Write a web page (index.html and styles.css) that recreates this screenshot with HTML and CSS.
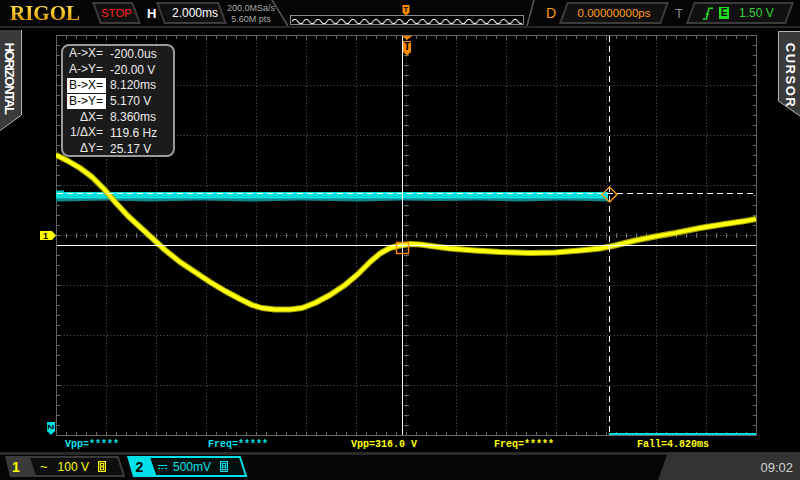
FILE: index.html
```html
<!DOCTYPE html>
<html>
<head>
<meta charset="utf-8">
<title>Scope</title>
<link rel="stylesheet" href="styles.css">
</head>
<body>
<div class="scope">
  <header class="topbar">
    <div class="logo">RIGOL</div>
    <div class="box box-l stop">STOP</div>
    <div class="hlabel">H</div>
    <div class="box box-l tbase">2.000ms</div>
    <div class="srate"><span>200.0MSa/s</span><span>5.60M pts</span></div>
    <svg class="memory" width="266" height="26" viewBox="0 0 266 26">
      <defs>
        <pattern id="mw" x="22" y="16" width="11.6" height="9" patternUnits="userSpaceOnUse">
          <path d="M0 5.5Q2.9 1 5.8 5.5T11.6 5.5" stroke="#ffffff" stroke-width="1.1" fill="none"/>
        </pattern>
      </defs>
      <path d="M2 0L18 26M264 0L257 26" stroke="#555" stroke-width="1.6" fill="none"/>
      <rect x="20.5" y="15.5" width="233" height="9" fill="#000" stroke="#8a8a8a"/>
      <rect x="22" y="16" width="230" height="8" fill="url(#mw)"/>
      <path d="M132.5 5H139.5V12.5L136 15.5L132.5 12.5Z" fill="#ff8a00"/>
      <text x="136" y="11.5" class="tmark">T</text>
    </svg>
    <div class="dlabel">D</div>
    <div class="box box-r delay">0.00000000ps</div>
    <div class="tlabel">T</div>
    <div class="box box-r trig">
      <svg class="edge" width="10" height="13" viewBox="0 0 10 13">
        <path d="M0 12H3.4L6 1.2H10" stroke="#2fd52f" stroke-width="1.6" fill="none"/>
        <path d="M2.2 7.6L4.9 4.6L5.6 8.3Z" fill="#2fd52f"/>
      </svg>
      <span class="ebox">E</span>
      <span class="tlevel">1.50 V</span>
    </div>
  </header>

  <main class="main">
    <aside class="side side-left">
      <svg width="22" height="102" viewBox="0 0 22 102">
        <polygon points="0,0 21.5,0 21.5,85 0,100" fill="#3a3a3a"/>
        <polyline points="21.5,0 21.5,85 0,100.5" fill="none" stroke="#b5b5b5"/>
        <text class="tabtext tab-h" x="9" y="48" transform="rotate(90 9 48)">HORIZONTAL</text>
      </svg>
    </aside>

    <svg class="plot" width="756" height="409" viewBox="22 28 756 409">
      <defs>
        <pattern id="tx" x="56" y="0" width="10" height="10" patternUnits="userSpaceOnUse">
          <rect width="1" height="10" fill="#6a6a6a"/>
        </pattern>
        <pattern id="ty" x="0" y="35" width="10" height="10" patternUnits="userSpaceOnUse">
          <rect width="10" height="1" fill="#6a6a6a"/>
        </pattern>
        <clipPath id="gridclip"><rect x="56" y="35" width="701" height="401"/></clipPath>
      </defs>
      <!-- dotted graticule -->
      <path stroke="#5a5a5a" stroke-dasharray="1 2.333" fill="none"
        d="M106.5 36V435M156.5 36V435M206.5 36V435M256.5 36V435M306.5 36V435M356.5 36V435M406.5 36V435M456.5 36V435M506.5 36V435M556.5 36V435M606.5 36V435M656.5 36V435M706.5 36V435
           M57 85.5H756M57 135.5H756M57 185.5H756M57 235.5H756M57 285.5H756M57 335.5H756M57 385.5H756"/>
      <!-- center ticks -->
      <rect x="57" y="233" width="699" height="5" fill="url(#tx)"/>
      <rect x="404" y="36" width="5" height="399" fill="url(#ty)"/>
      <!-- border ticks -->
      <rect x="57" y="36" width="699" height="3" fill="url(#tx)"/>
      <rect x="57" y="432" width="699" height="3" fill="url(#tx)"/>
      <rect x="57" y="36" width="3" height="399" fill="url(#ty)"/>
      <rect x="753" y="36" width="3" height="399" fill="url(#ty)"/>
      <rect x="56.5" y="35.5" width="700" height="400" fill="none" stroke="#646464"/>

      <!-- channel 2 (cyan) -->
      <path d="M56 197.5H608V201.5L590 201L560 200.5L520 201.5L480 200.5L440 201L400 200.5L360 201.5L300 200.5L250 201.5L200 200.5L150 201.5L110 200.5L56 201.5Z" fill="#0b8a8a"/>
      <rect x="56" y="192" width="552" height="6.5" fill="#00dede"/>
      <path d="M56 190.5H64V192H56Z" fill="#00c8c8"/>
      <path d="M609 434H756" stroke="#00dede" stroke-width="2"/>

      <!-- channel 1 (yellow) -->
      <g clip-path="url(#gridclip)">
      <polyline class="wave1-edge" points="56,155 68,161 80,168 92,177 104,189 116,203 128,216 140,227 152,238 165,250 180,262 195,272 210,282 225,291 240,299 252,305 262,308 275,309.5 290,309.5 302,308 315,303 330,295 345,285 358,274 370,262 380,253.5 390,248 400,245.5 410,244 420,244.5 435,246.5 450,248.5 475,250.5 500,252 530,253 555,252.5 580,250.5 600,248.5 615,245.5 635,240.5 655,236.5 675,233 700,228 725,224 745,221 756,219"/>
      <polyline class="wave1" points="56,155 68,161 80,168 92,177 104,189 116,203 128,216 140,227 152,238 165,250 180,262 195,272 210,282 225,291 240,299 252,305 262,308 275,309.5 290,309.5 302,308 315,303 330,295 345,285 358,274 370,262 380,253.5 390,248 400,245.5 410,244 420,244.5 435,246.5 450,248.5 475,250.5 500,252 530,253 555,252.5 580,250.5 600,248.5 615,245.5 635,240.5 655,236.5 675,233 700,228 725,224 745,221 756,219"/>
      </g>

      <!-- cursors -->
      <path d="M402.5 36V435M57 245.5H756" stroke="#ffffff" stroke-width="1"/>
      <path d="M609.5 36V435M57 193.5H756" stroke="#ffffff" stroke-width="1" stroke-dasharray="6 4"/>
      <rect x="396.5" y="242.5" width="12" height="11" fill="none" stroke="#ff8c00" stroke-width="1.4"/>
      <polygon points="609.5,187 617,194.5 609.5,202 602,194.5" fill="none" stroke="#ff9a10" stroke-width="1.4"/>

      <!-- trigger position marker -->
      <polygon points="402,36 412,36 407,40" fill="#ff8a00"/>
      <path d="M403 41H411V52L407 55.5L403 52Z" fill="#ff8a00"/>
      <text x="407" y="50" class="tmark big">T</text>

      <!-- channel markers -->
      <polygon points="40,231 52,231 56,235.5 52,240 40,240" fill="#ffff00"/>
      <text x="45.5" y="239" class="chmark">1</text>
      <path d="M47 422H55V431L51 435L47 431Z" fill="#00e0e8"/>
      <text x="51" y="427" class="chmark rot" transform="rotate(90 51 427)">2</text>
    </svg>

    <aside class="side side-right">
      <svg width="22" height="90" viewBox="0 0 22 90">
        <polygon points="0.5,0.5 22,0.5 22,85 0.5,70" fill="#3a3a3a"/>
        <polyline points="22,0.5 0.5,0.5 0.5,70 22,85" fill="none" stroke="#b5b5b5"/>
        <text class="tabtext tab-c" x="12.5" y="44.5" transform="rotate(90 12.5 44.5)">CURSOR</text>
      </svg>
    </aside>

    <div class="cursor-box">
      <div class="crow"><span class="clabel">A-&gt;X=</span><span class="cval">-200.0us</span></div>
      <div class="crow"><span class="clabel">A-&gt;Y=</span><span class="cval">-20.00 V</span></div>
      <div class="crow"><span class="clabel sel">B-&gt;X=</span><span class="cval">8.120ms</span></div>
      <div class="crow"><span class="clabel sel">B-&gt;Y=</span><span class="cval">5.170 V</span></div>
      <div class="crow"><span class="clabel">ΔX=</span><span class="cval">8.360ms</span></div>
      <div class="crow"><span class="clabel">1/ΔX=</span><span class="cval">119.6 Hz</span></div>
      <div class="crow"><span class="clabel">ΔY=</span><span class="cval">25.17 V</span></div>
    </div>
  </main>

  <div class="measure">
    <span class="m-c2">Vpp=*****</span>
    <span class="m-c2">Freq=*****</span>
    <span class="m-c1">Vpp=316.0 V</span>
    <span class="m-c1">Freq=*****</span>
    <span class="m-c1">Fall=4.820ms</span>
  </div>
  <div class="sep"></div>

  <footer class="bottombar">
    <div class="chan ch1">
      <span class="ctab">1</span>
      <span class="acsym">~</span>
      <span class="cval2">100 V</span>
      <svg class="bw" width="8" height="11" viewBox="0 0 8 11">
        <rect x="0.6" y="0.6" width="6.8" height="9.8" fill="none" stroke="currentColor" stroke-width="1.2"/>
        <rect x="2.4" y="2.4" width="3.2" height="2.6" fill="none" stroke="currentColor"/>
        <rect x="2.4" y="6" width="3.2" height="2.6" fill="none" stroke="currentColor"/>
      </svg>
    </div>
    <div class="chan ch2">
      <span class="ctab">2</span>
      <svg class="dc" width="9" height="6" viewBox="0 0 9 6">
        <path d="M0 1.5H9M0 4.5H2M3.5 4.5H5.5M7 4.5H9" stroke="currentColor" stroke-width="1"/>
      </svg>
      <span class="cval2">500mV</span>
      <svg class="bw" width="8" height="11" viewBox="0 0 8 11">
        <rect x="0.6" y="0.6" width="6.8" height="9.8" fill="none" stroke="currentColor" stroke-width="1.2"/>
        <rect x="2.4" y="2.4" width="3.2" height="2.6" fill="none" stroke="currentColor"/>
        <rect x="2.4" y="6" width="3.2" height="2.6" fill="none" stroke="currentColor"/>
      </svg>
    </div>
    <div class="clock">09:02</div>
  </footer>
</div>
</body>
</html>
```

FILE: styles.css
```css
* { box-sizing: border-box; margin: 0; padding: 0; }

html, body {
  width: 800px;
  height: 480px;
  background: #000;
  overflow: hidden;
}

body {
  font-family: "Liberation Sans", Arial, sans-serif;
  color: #fff;
}

.scope {
  width: 800px;
  height: 480px;
  display: flex;
  flex-direction: column;
}

/* ---------- top bar ---------- */
.topbar {
  height: 28px;
  flex: none;
  display: flex;
  align-items: center;
  background: #050505;
  border-bottom: 2px solid #262626;
}

.logo {
  margin-left: 10px;
  width: 72px;
  font: bold 21px/26px "Liberation Serif", serif;
  background: linear-gradient(#ffdc40 30%, #e6a00a 75%);
  -webkit-background-clip: text;
  background-clip: text;
  color: transparent;
}

.box {
  position: relative;
  isolation: isolate;
  height: 22px;
  display: flex;
  align-items: center;
  font-size: 12px;
}

.box::before {
  content: "";
  position: absolute;
  inset: 0;
  background: #111;
  border: 2px solid #3c3c3c;
  z-index: -1;
}

.box-l::before { transform: skewX(20deg); }
.box-r::before { transform: skewX(-20deg); }

.stop {
  margin-left: 14px;
  width: 41px;
  justify-content: center;
  color: #ff2020;
  font-size: 11.5px;
}

.hlabel {
  margin-left: 10px;
  width: 10px;
  font: bold 13px "Liberation Sans", sans-serif;
  color: #fff;
}

.tbase {
  margin-left: 3px;
  width: 63px;
  justify-content: flex-end;
  padding-right: 5px;
  color: #fff;
}

.srate {
  margin-left: 2px;
  width: 52px;
  display: flex;
  flex-direction: column;
  align-items: center;
  font-size: 9px;
  line-height: 11.5px;
  color: #a8a8a8;
  padding-top: 2px;
}

.memory {
  display: block;
  margin-left: -7px;
  align-self: flex-start;
  flex: none;
}

.tmark {
  font: bold 7px "Liberation Sans", sans-serif;
  fill: #000;
  text-anchor: middle;
}

.tmark.big { font-size: 10px; }

.dlabel {
  margin-left: 10px;
  width: 12px;
  font-size: 14px;
  color: #ff9a1e;
}

.delay {
  margin-left: 5px;
  width: 102px;
  justify-content: center;
  font-size: 11.5px;
  color: #ff9a1e;
}

.tlabel {
  margin-left: 10px;
  width: 9px;
  font-size: 13px;
  color: #8c8c8c;
}

.trig {
  margin-left: 6px;
  width: 100px;
  padding-left: 13px;
  color: #2fd52f;
}

.edge { display: block; flex: none; }

.ebox {
  margin-left: 6px;
  width: 10px;
  height: 12px;
  background: #22dd22;
  color: #000;
  font: bold 10px/12px "Liberation Sans", sans-serif;
  text-align: center;
}

.tlevel {
  margin-left: 10px;
  font-size: 12px;
}

/* ---------- main area ---------- */
.main {
  height: 409px;
  flex: none;
  display: flex;
  position: relative;
}

.side { width: 22px; flex: none; }
.side svg { display: block; }
.side-left svg { margin-top: 2px; }
.side-right svg { margin-top: 3px; }

.tabtext {
  font: bold 13px "Liberation Sans", sans-serif;
  fill: #fff;
  text-anchor: middle;
  dominant-baseline: central;
}

.tab-h { letter-spacing: -1.3px; }
.tab-c { letter-spacing: 1.5px; }

.plot { display: block; flex: none; }

.wave1-edge {
  fill: none;
  stroke: #a9a900;
  stroke-width: 6;
  stroke-linejoin: round;
  stroke-linecap: butt;
}

.wave1 {
  fill: none;
  stroke: #ffff10;
  stroke-width: 3.8;
  stroke-linejoin: round;
  stroke-linecap: butt;
}

.chmark {
  font: bold 9px "Liberation Sans", sans-serif;
  fill: #000;
  text-anchor: middle;
}

.chmark.rot { dominant-baseline: central; }

.cursor-box {
  position: absolute;
  left: 61px;
  top: 16px;
  width: 114px;
  height: 113px;
  background: #1b1b1b;
  border: 2px solid #9a9a9a;
  border-radius: 8px;
  font-size: 12px;
  color: #ececec;
}

.crow {
  display: flex;
  align-items: center;
  height: 15.8px;
}

.clabel {
  margin-left: 4px;
  width: 39px;
  height: 15px;
  line-height: 15px;
  text-align: right;
  padding-right: 3px;
}

.clabel.sel {
  background: #fff;
  color: #000;
}

.cval { margin-left: 4px; }

/* ---------- measurement row ---------- */
.measure {
  height: 15px;
  flex: none;
  display: grid;
  grid-template-columns: repeat(5, 143px);
  padding-left: 65px;
  font: bold 10px/15px "Liberation Mono", monospace;
  white-space: pre;
}

.m-c1 { color: #ffff00; }
.m-c2 { color: #00e0e8; }

.sep {
  height: 3px;
  flex: none;
  background: #2a2a2a;
}

/* ---------- bottom bar ---------- */
.bottombar {
  height: 25px;
  flex: none;
  display: flex;
  align-items: flex-start;
  background: #050505;
}

.chan {
  position: relative;
  isolation: isolate;
  margin-top: 1px;
  width: 120px;
  height: 21px;
  display: flex;
  align-items: center;
  font-size: 12px;
}

.chan::before {
  content: "";
  position: absolute;
  top: 0;
  bottom: 0;
  left: 26px;
  right: 3px;
  border: 2px solid #3a3a3a;
  background: #0e0e0e;
  transform: skewX(18deg);
  z-index: -1;
}

.ch1 { margin-left: 5px; color: #ffff00; }
.ch2 { margin-left: 2px; color: #00e0e8; }
.ch2::before { left: 24px; border-color: #00e0e8; background: #031010; }

.ctab {
  width: 30px;
  height: 21px;
  flex: none;
  display: flex;
  align-items: center;
  justify-content: center;
  font: bold 14px "Liberation Sans", sans-serif;
}

.ch1 .ctab {
  background: #3a3a3a;
  color: #ffff00;
  padding-right: 8px;
  clip-path: polygon(0 0, 23px 0, 100% 100%, 5px 100%);
}

.ch2 .ctab {
  background: #00e0e8;
  color: #000;
  padding-right: 5px;
  clip-path: polygon(0 0, 22px 0, 100% 100%, 6px 100%);
}

.acsym { margin-left: 5px; font-size: 13px; }
.ch1 .cval2 { margin-left: 10px; }
.ch2 .dc { margin-left: 1px; display: block; }
.ch2 .cval2 { margin-left: 6px; }
.bw { display: block; margin-left: 9px; }

.clock {
  margin-left: auto;
  margin-top: -3px;
  width: 142px;
  height: 28px;
  background: #333;
  clip-path: polygon(10px 0, 100% 0, 100% 100%, 0 100%);
  display: flex;
  align-items: center;
  justify-content: flex-end;
  padding-right: 7px;
  padding-top: 3px;
  font-size: 13px;
  color: #d2d2d2;
}
```
